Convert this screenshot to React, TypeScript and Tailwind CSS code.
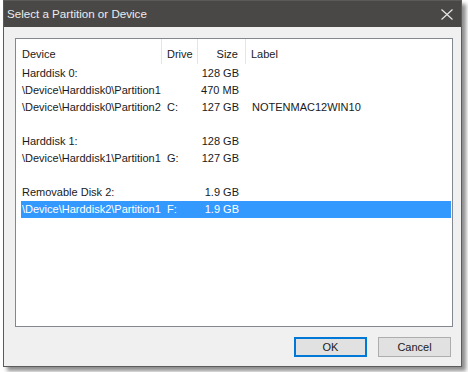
import React from "react";

type Row = { device: string; drive?: string; size?: string; label?: string; selected?: boolean; blank?: boolean };

const rows: Row[] = [
  { device: "Harddisk 0:", size: "128 GB" },
  { device: "\\Device\\Harddisk0\\Partition1", size: "470 MB" },
  { device: "\\Device\\Harddisk0\\Partition2", drive: "C:", size: "127 GB", label: "NOTENMAC12WIN10" },
  { device: "", blank: true },
  { device: "Harddisk 1:", size: "128 GB" },
  { device: "\\Device\\Harddisk1\\Partition1", drive: "G:", size: "127 GB" },
  { device: "", blank: true },
  { device: "Removable Disk 2:", size: "1.9 GB" },
  { device: "\\Device\\Harddisk2\\Partition1", drive: "F:", size: "1.9 GB", selected: true },
];

export default function App() {
  return (
    <main
      className="w-[468px] h-[372px] bg-white pl-[3px] overflow-hidden"
      style={{ fontFamily: '"Liberation Sans", Arial, sans-serif' }}
    >
      <div className="w-[459px] h-[367px] flex flex-col border border-[#5b5b5b] bg-[#f0f0f0] shadow-[4px_4px_4px_rgba(0,0,0,0.45)]">
        {/* title bar */}
        <div className="h-[26px] shrink-0 bg-[#4a4847] flex items-center justify-between pl-[3px] pr-[8px]">
          <span className="text-[11.6px] text-[#ececec]">Select a Partition or Device</span>
          <svg width="12" height="11" viewBox="0 0 12 11" className="mt-[1px]">
            <path d="M0.5 0.5 L11.5 10.5 M11.5 0.5 L0.5 10.5" stroke="#e6e6e6" strokeWidth="1.2" fill="none" />
          </svg>
        </div>

        <div className="flex-1 flex flex-col pt-[11px] pl-[11px] pr-[8px]">
          {/* list */}
          <div className="w-[438px] h-[289px] bg-white border border-[#828790] text-[11px] text-[#1a1a1a]">
            <div className="flex h-[25px] pl-[0px]">
              <div className="w-[146px] pl-[6px] pt-[7px] border-r border-[#e5e5e5]">Device</div>
              <div className="w-[36px] pl-[5px] pt-[7px] border-r border-[#e5e5e5]">Drive</div>
              <div className="w-[48px] pr-[7px] pt-[7px] text-right border-r border-[#e5e5e5]">Size</div>
              <div className="pl-[5px] pt-[7px]">Label</div>
            </div>
            <div className="pt-[1px] pl-[5px] pr-[1px]">
              {rows.map((r, i) => (
                <div
                  key={i}
                  className={`flex h-[17px] items-center ${r.selected ? "bg-[#3399ff] text-white" : ""}`}
                >
                  {!r.blank && (
                    <>
                      <div className="w-[141px] pl-[1px] whitespace-nowrap">{r.device}</div>
                      <div className="w-[36px] pl-[5px]">{r.drive}</div>
                      <div className="w-[48px] pr-[7px] text-right whitespace-nowrap">{r.size}</div>
                      <div className="pl-[6px]">{r.label}</div>
                    </>
                  )}
                </div>
              ))}
            </div>
          </div>

          {/* buttons */}
          <div className="flex justify-end gap-[11px] mt-[10px] pr-[2px] text-[11px] text-[#1a1a1a]">
            <button className="w-[73px] h-[20px] bg-[#e1e1e1] border-2 border-[#0078d7]">OK</button>
            <button className="w-[73px] h-[20px] bg-[#e1e1e1] border border-[#adadad]">Cancel</button>
          </div>
        </div>
      </div>
    </main>
  );
}
